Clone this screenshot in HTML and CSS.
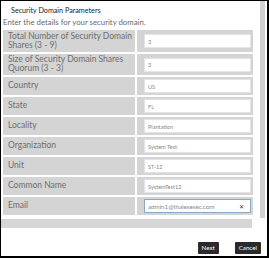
FILE: index.html
```html
<!DOCTYPE html>
<html>
<head>
<meta charset="utf-8">
<link rel="stylesheet" href="styles.css">
</head>
<body>
<div class="frame">
  <div class="scroll">
    <div class="content">
      <div class="title">Security Domain Parameters</div>
      <div class="subtitle">Enter the details for your security domain.</div>
      <div class="table">
        <div class="label">Total Number of Security Domain Shares (3 - 9)</div>
        <div class="value"><div class="input">3</div></div>
        <div class="label">Size of Security Domain Shares Quorum (3 - 3)</div>
        <div class="value"><div class="input">3</div></div>
        <div class="label">Country</div>
        <div class="value"><div class="input">US</div></div>
        <div class="label">State</div>
        <div class="value"><div class="input">FL</div></div>
        <div class="label">Locality</div>
        <div class="value"><div class="input">Plantation</div></div>
        <div class="label">Organization</div>
        <div class="value"><div class="input">System Test</div></div>
        <div class="label">Unit</div>
        <div class="value"><div class="input">ST-12</div></div>
        <div class="label">Common Name</div>
        <div class="value"><div class="input">SystemTest12</div></div>
        <div class="label">Email</div>
        <div class="value"><div class="input focus"><span>admin1@thalesesec.com</span><span class="clear">&#x2715;</span></div></div>
      </div>
    </div>
    <div class="vbar"></div>
  </div>
  <div class="hbar"></div>
  <div class="footer">
    <button class="btn">Next</button>
    <button class="btn">Cancel</button>
  </div>
</div>
</body>
</html>
```
FILE: styles.css
```css
* { box-sizing: border-box; }
html, body { margin: 0; padding: 0; background: #fff; }
body { font-family: "Lato", "DejaVu Sans", sans-serif; }
.frame {
  width: 269px;
  height: 258px;
  border: 1px solid #000;
  border-right-width: 2px;
  border-bottom-width: 2px;
  display: flex;
  flex-direction: column;
  background: #fff;
}
.scroll {
  height: 217px;
  display: flex;
}
.content {
  width: 259px;
  padding-left: 2px;
}
.vbar {
  width: 5px;
  background: #d2d2d2;
}
.title {
  margin-left: 8px;
  margin-top: 5px;
  font-size: 7.2px;
  line-height: 10px;
  color: #222;
}
.subtitle {
  margin-top: 1px;
  font-size: 7.8px;
  line-height: 10px;
  color: #6a6a6a;
}
.table {
  margin-top: 3px;
  width: 250px;
  display: grid;
  grid-template-columns: 132px 116px;
  grid-template-rows: 22px 21px repeat(7, 18px);
  column-gap: 2px;
  row-gap: 2px;
}
.label {
  background: #d4d4d4;
  color: #6e6e6e;
  font-size: 8.5px;
  line-height: 9px;
  padding-left: 5px;
  padding-bottom: 1px;
  display: flex;
  align-items: center;
}
.value {
  background: #d4d4d4;
  display: flex;
  align-items: center;
  padding-left: 7px;
  padding-right: 2px;
}
.input {
  width: 100%;
  height: 14px;
  background: #fff;
  border: 1px solid #e4e4e4;
  font-size: 5.6px;
  color: #888;
  padding-left: 3px;
  display: flex;
  align-items: center;
  justify-content: space-between;
}
.input.focus {
  border-color: #8fa8c4;
  padding-right: 6px;
  font-size: 6.2px;
}
.clear {
  font-size: 6px;
  color: #333;
  font-weight: bold;
}
.hbar {
  margin-top: 1px;
  height: 9px;
  width: 251px;
  background: #d6d6d6;
}
.footer {
  flex: 1;
  display: flex;
  justify-content: flex-end;
  align-items: flex-end;
  gap: 16px;
  padding-right: 6px;
  padding-bottom: 2px;
}
.btn {
  height: 12px;
  background: #2a2a2a;
  color: #fff;
  border: 0;
  border-radius: 1px;
  font-family: "Lato", sans-serif;
  font-size: 6.2px;
  padding: 0 4px;
  line-height: 12px;
}
```
